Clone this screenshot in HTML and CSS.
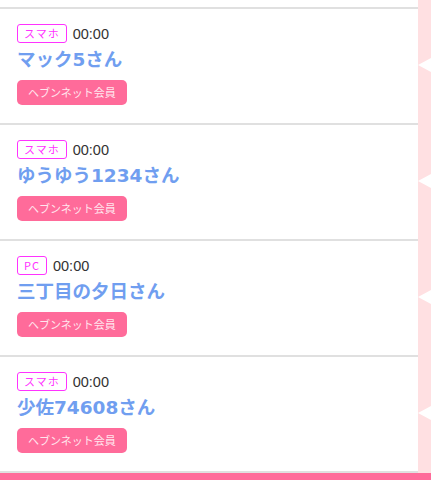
FILE: index.html
```html
<!DOCTYPE html>
<html lang="ja">
<head>
  <meta charset="UTF-8">
  <title>アクセス履歴</title>
  <link rel="stylesheet" href="styles.css">
</head>
<body>

  <!-- Visitor list -->
  <div class="history">
    <div class="row row-top">
      <div class="entry"></div>
      <div class="side"></div>
    </div>

    <div class="row">
      <div class="entry">
        <div class="meta"><span class="device">スマホ</span><span class="time">00:00</span></div>
        <div class="name">マック5さん</div>
        <span class="member">ヘブンネット会員</span>
      </div>
      <div class="side"><span class="notch"></span></div>
    </div>

    <div class="row">
      <div class="entry">
        <div class="meta"><span class="device">スマホ</span><span class="time">00:00</span></div>
        <div class="name">ゆうゆう1234さん</div>
        <span class="member">ヘブンネット会員</span>
      </div>
      <div class="side"><span class="notch"></span></div>
    </div>

    <div class="row">
      <div class="entry">
        <div class="meta"><span class="device">PC</span><span class="time">00:00</span></div>
        <div class="name">三丁目の夕日さん</div>
        <span class="member">ヘブンネット会員</span>
      </div>
      <div class="side"><span class="notch"></span></div>
    </div>

    <div class="row">
      <div class="entry">
        <div class="meta"><span class="device">スマホ</span><span class="time">00:00</span></div>
        <div class="name">少佐74608さん</div>
        <span class="member">ヘブンネット会員</span>
      </div>
      <div class="side"><span class="notch"></span></div>
    </div>

    <div class="row row-end">
      <div class="entry"></div>
      <div class="side"></div>
    </div>
  </div>

  <div class="footer-bar"></div>

</body>
</html>
```

FILE: styles.css
```css
body {
  margin: 0;
  font-family: "Noto Sans CJK JP", "Noto Sans", sans-serif;
  background-color: #fff;
  overflow: hidden;
}

.history {
  display: flex;
  flex-direction: column;
}

.row {
  display: flex;
  height: 116px;
}

.row-top {
  height: 7px;
}

.row-end {
  height: 2px;
}

.entry {
  flex: 1;
  box-sizing: border-box;
  border-top: 2px solid #e0e0e0;
  padding: 15px 17px 0;
  background-color: #fff;
}

.row-top .entry {
  border-top: none;
  padding: 0;
}

.row-end .entry {
  padding: 0;
}

.side {
  width: 13px;
  background-color: #ffe0e2;
  display: flex;
  align-items: center;
  justify-content: flex-end;
}

.notch {
  width: 0;
  height: 0;
  border-top: 7px solid transparent;
  border-bottom: 7px solid transparent;
  border-right: 13px solid #fff;
}

.meta {
  display: flex;
  align-items: center;
  height: 19px;
}

.device {
  box-sizing: border-box;
  height: 19px;
  line-height: 17px;
  padding: 0 6px;
  border: 1px solid #ff33ff;
  border-radius: 3px;
  color: #ff33ff;
  font-size: 11px;
  letter-spacing: 1px;
}

.time {
  margin-left: 6px;
  font-family: "Liberation Sans", sans-serif;
  font-size: 14.5px;
  color: #333;
}

.name {
  margin-top: 5px;
  height: 24px;
  line-height: 24px;
  font-family: "DejaVu Sans", "Noto Sans CJK JP", sans-serif;
  font-size: 18.5px;
  font-weight: bold;
  color: #709ef0;
}

.member {
  display: inline-block;
  margin-top: 8px;
  height: 25px;
  line-height: 25px;
  padding: 0 11px;
  border-radius: 5px;
  background-color: #ff6b9a;
  color: #ffe6ee;
  font-size: 11px;
}

.footer-bar {
  height: 12px;
  background-color: #ff6b9a;
}
```
